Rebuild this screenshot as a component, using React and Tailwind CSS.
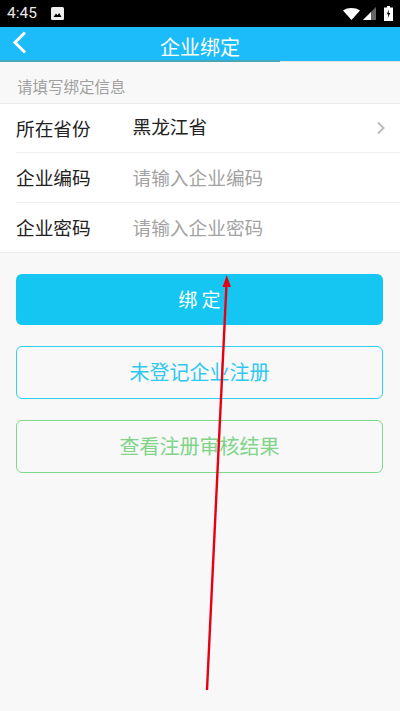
const cjk = { fontFamily: '"Noto Sans CJK SC", "Liberation Sans", sans-serif' };

const StatusBar = () => (
  <div className="h-[27px] bg-black flex items-center text-white relative">
    <span className="ml-[7px] text-[15.5px] leading-none font-['Roboto',sans-serif] text-[#e8e8e8]">4:45</span>
    <svg className="ml-[14px]" width="13" height="13" viewBox="0 0 13 13">
      <rect width="13" height="13" rx="1.5" fill="#eee" />
      <path d="M2.5 10 L5 6.5 L6.5 8.3 L8.2 6 L10.5 10 Z" fill="#000" />
    </svg>
    <div className="ml-auto flex items-center mr-[7px]">
      <svg width="17" height="12" viewBox="0 0 17 12">
        <path d="M0 2.5 C4.5 -0.8 12.5 -0.8 17 2.5 L8.5 12 Z" fill="#fff" />
      </svg>
      <svg className="ml-[3px]" width="13" height="13" viewBox="0 0 13 13">
        <path d="M13 0 L13 13 L0 13 Z" fill="#666" />
        <path d="M8 5 L8 13 L0 13 Z" fill="#fff" />
      </svg>
      <svg className="ml-[8px]" width="9" height="15" viewBox="0 0 9 15">
        <path d="M3 0 H6 V1.5 H9 V15 H0 V1.5 H3 Z" fill="#fff" />
        <path d="M5 3.5 L2.8 8.3 H4.3 L3.8 12 L6.3 7 H4.7 Z" fill="#000" />
      </svg>
    </div>
  </div>
);

const Header = () => (
  <div className="h-[35px] bg-[#1cbcfa] relative flex justify-center">
    <span className="text-white text-[20px] leading-[27px] mt-[6px]" style={cjk}>企业绑定</span>
    <svg className="absolute left-[12px] top-[4px]" width="15" height="24" viewBox="0 0 15 24" fill="none">
      <path d="M13 1.5 L3 11.5 L13 21.5" stroke="#fff" strokeWidth="3" />
    </svg>
    <div className="absolute left-0 bottom-0 h-[2px] w-[280px] bg-[#45a8b8]" />
    <div className="absolute left-[280px] right-0 bottom-0 h-[1px] bg-[#dedede]" />
  </div>
);

const Row = ({ label, children, last, first }) => (
  <div className={`${first ? 'h-[49px]' : 'h-[50px]'} flex items-center ml-[16px] ${last ? 'pb-[1px]' : 'border-b border-[#eeeeee]'}`}>
    <span className="w-[117px] shrink-0 text-[18.7px] text-[#222222] leading-none" style={cjk}>{label}</span>
    {children}
  </div>
);

export default function App() {
  return (
    <div className="w-[400px] h-[711px] bg-[#f8f8f8] relative overflow-hidden" style={cjk}>
      <StatusBar />
      <Header />
      <div className="h-[41px] pl-[17px] pt-[14px] text-[15.5px] leading-[20px] text-[#a0a0a0]">请填写绑定信息</div>
      <div className="bg-white border-y border-[#ececec] h-[150px]">
        <Row label="所在省份" first>
          <span className="text-[18.7px] leading-none text-[#222222] mb-[3px] -ml-[0.5px]">黑龙江省</span>
          <svg className="ml-auto mr-[14px]" width="10" height="14" viewBox="0 0 10 14" fill="none">
            <path d="M2 1.5 L7.5 7 L2 12.5" stroke="#bdbdbd" strokeWidth="2" />
          </svg>
        </Row>
        <Row label="企业编码">
          <span className="text-[18.7px] leading-none text-[#a3a3a3] -ml-[0.5px]">请输入企业编码</span>
        </Row>
        <Row label="企业密码" last>
          <span className="text-[18.7px] leading-none text-[#a3a3a3] -ml-[0.5px]">请输入企业密码</span>
        </Row>
      </div>
      <div className="pl-[16px] pr-[17px] pt-[21px] flex flex-col">
        <div className="h-[51px] rounded-[6px] bg-[#16c6f2] flex items-center justify-center text-white text-[19px]">绑 定</div>
        <div className="h-[53px] mt-[21px] pb-[2px] rounded-[6px] border-[1.5px] border-[#2fd0f7] flex items-center justify-center text-[#2fc8ef] text-[20px]">未登记企业注册</div>
        <div className="h-[53px] mt-[21px] pb-[2px] rounded-[6px] border-[1.5px] border-[#80d98a] flex items-center justify-center text-[#7fd488] text-[20px]">查看注册审核结果</div>
      </div>
      <svg className="absolute left-0 top-0 pointer-events-none" width="400" height="711" viewBox="0 0 400 711">
        <path d="M207 690 L226.5 284" stroke="#e60012" strokeWidth="2.4" fill="none" />
        <path d="M226.7 275 L231 287 L222.6 287 Z" fill="#e60012" />
      </svg>
    </div>
  );
}
